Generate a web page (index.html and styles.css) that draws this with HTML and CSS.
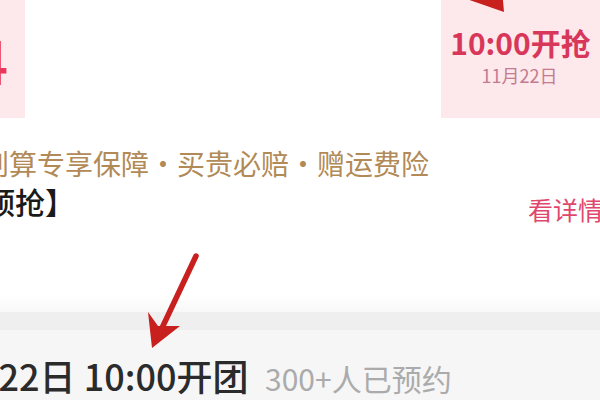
FILE: index.html
```html
<!DOCTYPE html>
<html lang="zh-CN">
<head>
<meta charset="utf-8">
<link rel="stylesheet" href="styles.css">
</head>
<body>
<div class="page">
  <div class="top">
    <div class="panel-left"><span class="big-digit">4</span></div>
    <div class="panel-right">
      <div class="start-time">10:00开抢</div>
      <div class="start-date">11月22日</div>
    </div>
  </div>
  <div class="benefits"><span class="benefits-text">划算专享保障·买贵必赔·赠运费险</span></div>
  <div class="info-row">
    <div class="title"><span class="title-text">预抢】</span></div>
    <div class="detail">
      <div class="divider"></div>
      <div class="detail-link">看详情</div>
    </div>
  </div>
  <div class="fade"></div>
  <div class="band"></div>
  <div class="group">
    <span class="group-time">1月22日 10:00开团</span>
    <span class="group-count">300+人已预约</span>
  </div>
  <svg class="arrows" width="600" height="400" viewBox="0 0 600 400">
    <polygon points="458,-4 504,12 500,-34 489,-7" fill="#c8201e"/>
    <line x1="196" y1="256" x2="162" y2="328" stroke="#c8201e" stroke-width="5.5" stroke-linecap="round"/>
    <polygon points="148,312 158,326 180,326 152,348" fill="#c8201e"/>
  </svg>
</div>
</body>
</html>
```

FILE: styles.css
```css
html, body {
  margin: 0;
  padding: 0;
  background: #ffffff;
}
.page {
  position: relative;
  width: 600px;
  height: 400px;
  overflow: hidden;
  font-family: "Noto Sans CJK SC", "Noto Sans", sans-serif;
  background: #ffffff;
}
.top {
  display: flex;
  justify-content: space-between;
  height: 118px;
}
.panel-left {
  width: 25px;
  background: #fde8ec;
  overflow: hidden;
  display: flex;
  align-items: center;
}
.big-digit {
  margin-left: -26px;
  font-size: 60px;
  line-height: 60px;
  font-weight: 500;
  color: #e8375a;
}
.panel-right {
  width: 159px;
  background: #fde8ec;
  display: flex;
  flex-direction: column;
  align-items: center;
  padding-top: 24px;
  box-sizing: border-box;
}
.start-time {
  font-size: 30px;
  line-height: 36px;
  font-weight: 700;
  color: #d8375a;
  white-space: nowrap;
  margin-left: 0;
}
.start-date {
  font-size: 18px;
  line-height: 22px;
  color: #c27c90;
  margin-top: 4px;
  margin-left: -2px;
}
.benefits {
  margin-top: 29px;
  height: 32px;
  overflow: hidden;
  white-space: nowrap;
}
.benefits-text {
  display: inline-block;
  margin-left: -19px;
  font-size: 28px;
  line-height: 32px;
  color: #b18a57;
}
.info-row {
  display: flex;
  justify-content: space-between;
  height: 108px;
  margin-top: 8px;
}
.title {
  overflow: hidden;
  white-space: nowrap;
  padding-top: 0;
  margin-top: -4px;
}
.title-text {
  display: inline-block;
  margin-left: -15px;
  font-size: 30px;
  line-height: 36px;
  font-weight: 500;
  color: #1a1a1a;
}
.detail {
  display: flex;
  width: 93px;
}
.divider {
  width: 2px;
  height: 98px;
  background: #f0f0f3;
}
.detail-link {
  margin-left: 21px;
  margin-top: 7px;
  font-size: 25px;
  line-height: 30px;
  color: #e0476c;
  white-space: nowrap;
}
.fade {
  height: 17px;
  background: linear-gradient(#ffffff, #f8f8f8);
}
.band {
  height: 18px;
  background: #efefef;
}
.group {
  height: 70px;
  background: #f6f6f6;
  white-space: nowrap;
  padding-top: 24px;
  box-sizing: border-box;
}
.group-time {
  display: inline-block;
  margin-left: -58px;
  font-size: 36px;
  line-height: 42px;
  font-weight: 500;
  color: #2b2b2b;
}
.group-count {
  font-size: 30px;
  line-height: 42px;
  color: #ababab;
  margin-left: 13px;
}
.arrows {
  position: absolute;
  left: 0;
  top: 0;
}
```
